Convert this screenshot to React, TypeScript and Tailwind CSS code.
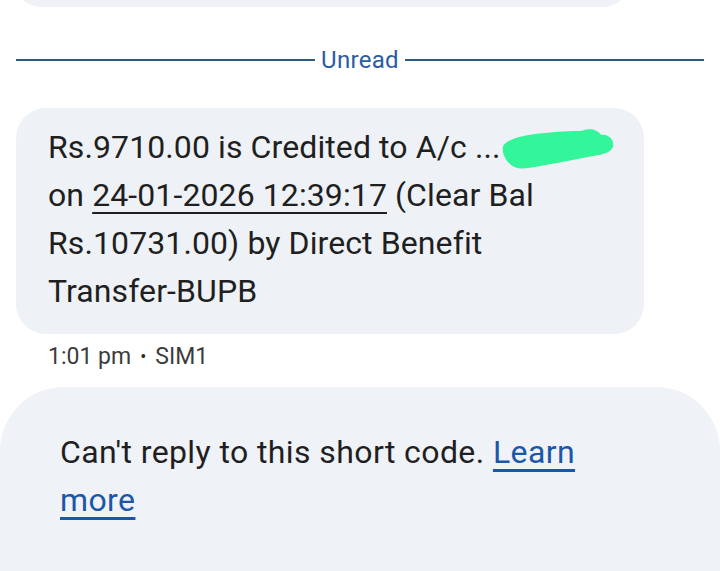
export default function App() {
  return (
    <div
      className="relative h-[571px] w-[720px] overflow-hidden bg-white text-[#1f1f1f]"
      style={{ fontFamily: 'Roboto, "Noto Sans", sans-serif' }}
    >
      {/* previous bubble, cut off at top */}
      <div className="ml-[12px] -mt-[40px] h-[47px] w-[620px] rounded-b-[30px] bg-[#eef2f6]" />

      {/* unread divider */}
      <div className="mt-[38px] flex items-center px-[16px]">
        <div className="h-[2px] flex-1 bg-[#2b5a7e]" />
        <span className="px-[6px] text-[24px] leading-[30px] tracking-[0.3px] text-[#2a5ca4]">Unread</span>
        <div className="h-[2px] flex-1 bg-[#2b5a7e]" />
      </div>

      {/* message bubble */}
      <div className="mt-[33px] ml-[16px] w-[628px] rounded-[30px] bg-[#eef2f6] px-[32px] pt-[15px] pb-[19px]">
        <div className="text-[32px] leading-[48px] tracking-[0.1px]">
          <p className="whitespace-nowrap">
            Rs.9710.00 is Credited to A/c ...
            <span className="relative inline-block w-0">
              {/* redaction scribble */}
              <svg width="114" height="44" viewBox="0 0 118 44" className="absolute -top-[30px] left-[0px]">
                <path
                  d="M6 14 C20 4 60 3 84 2 C92 -1 100 1 103 6 C111 6 117 10 116 18 C114 26 101 27 91 29 C71 33 41 39 25 41 C12 43 4 33 2 24 C1 18 3 16 6 14 Z"
                  fill="#33f59a"
                />
              </svg>
            </span>
          </p>
          <p className="whitespace-nowrap">
            on <span className="underline decoration-[2px] underline-offset-[6px]">24-01-2026 12:39:17</span> (Clear Bal
          </p>
          <p className="whitespace-nowrap">Rs.10731.00) by Direct Benefit</p>
          <p className="whitespace-nowrap">Transfer-BUPB</p>
        </div>
      </div>

      {/* timestamp */}
      <div className="mt-[9px] ml-[48px] flex items-center gap-[9px] text-[23px] leading-[28px] text-[#3c3c3c]">
        <span>1:01 pm</span>
        <span className="text-[18px] text-[#2a2a2a]">•</span>
        <span>SIM1</span>
      </div>

      {/* can't reply panel */}
      <div className="mt-[16px] h-[300px] rounded-t-[64px] bg-[#eff2f7] pl-[60px] pt-[41px]">
        <p className="w-[560px] text-[32px] leading-[48px] tracking-[0.4px]">
          Can't reply to this short code.{' '}
          <span className="text-[#1b57a6] underline decoration-[3px] underline-offset-[6px]">Learn</span>{' '}
          <span className="text-[#1b57a6] underline decoration-[3px] underline-offset-[6px]">more</span>
        </p>
      </div>
    </div>
  );
}
